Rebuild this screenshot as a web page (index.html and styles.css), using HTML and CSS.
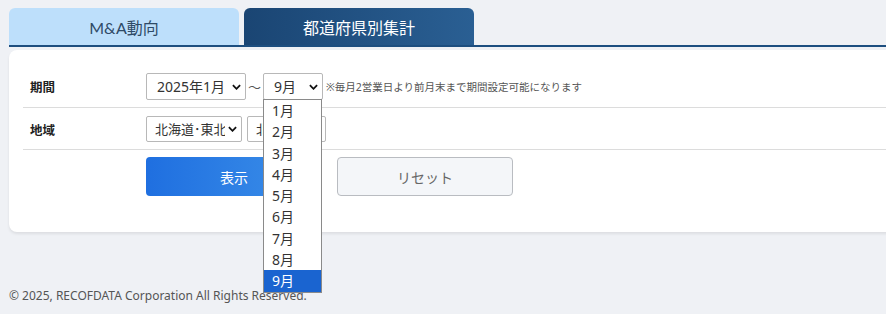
FILE: index.html
```html
<!DOCTYPE html>
<html lang="ja">
<head>
    <meta charset="UTF-8">
    <meta name="viewport" content="width=device-width, initial-scale=1.0">
    <title>都道府県別集計</title>
    <link rel="stylesheet" href="styles.css">
</head>
<body>
    <div class="page">
        <div class="tabs">
            <a class="tab" href="#">M&amp;A動向</a>
            <a class="tab active" href="#">都道府県別集計</a>
        </div>

        <div class="card">
            <div class="row">
                <div class="label">期間</div>
                <div class="fields">
                    <span class="select select-from">
                        <select>
                            <option>2025年1月</option>
                        </select>
                        <svg class="chevron" viewBox="0 0 10 6"><path d="M1 1l4 4 4-4" /></svg>
                    </span>
                    <span class="tilde">～</span>
                    <span class="select select-to">
                        <select>
                            <option>9月</option>
                        </select>
                        <svg class="chevron" viewBox="0 0 10 6"><path d="M1 1l4 4 4-4" /></svg>
                        <div class="listbox">
                            <div class="option">1月</div>
                            <div class="option">2月</div>
                            <div class="option">3月</div>
                            <div class="option">4月</div>
                            <div class="option">5月</div>
                            <div class="option">6月</div>
                            <div class="option">7月</div>
                            <div class="option">8月</div>
                            <div class="option selected">9月</div>
                        </div>
                    </span>
                    <span class="note">※毎月2営業日より前月末まで期間設定可能になります</span>
                </div>
            </div>

            <div class="row">
                <div class="label">地域</div>
                <div class="fields">
                    <span class="select select-area">
                        <select>
                            <option>北海道･東北</option>
                        </select>
                        <svg class="chevron" viewBox="0 0 10 6"><path d="M1 1l4 4 4-4" /></svg>
                    </span>
                    <span class="select select-pref">
                        <select>
                            <option>北海道</option>
                        </select>
                        <svg class="chevron" viewBox="0 0 10 6"><path d="M1 1l4 4 4-4" /></svg>
                    </span>
                </div>
            </div>

            <div class="actions">
                <button class="btn btn-primary">表示</button>
                <button class="btn btn-reset">リセット</button>
            </div>
        </div>

        <footer class="footer">© 2025, RECOFDATA Corporation All Rights Reserved.</footer>
    </div>
</body>
</html>
```

FILE: styles.css
```css
html, body {
    overflow: hidden;
}
body {
    margin: 0;
    background-color: #eff1f5;
    font-family: "Noto Sans", "Noto Sans CJK JP", sans-serif;
    color: #333;
}
.page {
    width: calc(100% + 30px);
    padding: 8px 0 0 9px;
    box-sizing: border-box;
}
.tabs {
    display: flex;
    gap: 5px;
    border-bottom: 2px solid #1d4e7f;
}
.tab {
    width: 230px;
    height: 37px;
    display: flex;
    align-items: center;
    justify-content: center;
    border-radius: 6px 6px 0 0;
    background-color: #bddffb;
    color: #2f4a66;
    font-family: "Lato", "Noto Sans CJK JP", sans-serif;
    font-size: 16px;
    text-decoration: none;
}
.tab.active {
    background: linear-gradient(to right, #1a4573, #2a5f93);
    color: #fff;
}
.card {
    margin-top: 3px;
    background-color: #fff;
    border-radius: 8px 0 0 8px;
    box-shadow: 0 2px 3px rgba(0, 0, 0, 0.08);
    padding: 15px 0 36px 14px;
}
.row {
    display: flex;
    align-items: center;
    padding: 8px 0 7px;
    border-bottom: 1px solid #dcdcdc;
}
.label {
    width: 116px;
    padding-left: 7px;
    font-size: 12.5px;
    font-weight: bold;
    color: #222;
}
.fields {
    display: flex;
    align-items: center;
    gap: 5px;
}
.select {
    position: relative;
    display: inline-block;
}
.select select {
    appearance: none;
    -webkit-appearance: none;
    height: 27px;
    border: 1px solid #b8b8b8;
    border-radius: 2px;
    background: #fff;
    font-family: "Noto Sans", "Noto Sans CJK JP", sans-serif;
    font-size: 14px;
    color: #333;
    padding: 0 20px 0 10px;
    box-sizing: border-box;
}
.select-from select { width: 100px; }
.select-to select { width: 60px; }
.select-area select { width: 96px; height: 26px; padding: 0 16px 0 8px; font-size: 13px; }
.select-pref select { width: 79px; height: 26px; padding-left: 8px; font-size: 13px; }
.chevron {
    position: absolute;
    right: 5px;
    top: 50%;
    width: 9px;
    height: 6px;
    margin-top: -3px;
    fill: none;
    stroke: #111;
    stroke-width: 2;
    pointer-events: none;
}
.tilde {
    font-size: 13px;
    color: #555;
    margin: 0 -3px;
}
.note {
    font-size: 10.5px;
    color: #555;
    margin-left: -2px;
}
.listbox {
    position: absolute;
    left: 0;
    top: 26px;
    width: 59px;
    background: #fff;
    border: 1px solid #8a8a8a;
    box-sizing: border-box;
    z-index: 10;
}
.option {
    height: 21.3px;
    line-height: 21px;
    padding-left: 8px;
    font-size: 14px;
    color: #333;
}
.option.selected {
    background-color: #1a64d0;
    color: #fff;
}
.actions {
    display: flex;
    gap: 15px;
    padding: 7px 0 0 123px;
}
.btn {
    width: 176px;
    height: 39px;
    border-radius: 4px;
    font-family: "Noto Sans", "Noto Sans CJK JP", sans-serif;
    font-size: 14px;
    cursor: pointer;
}
.btn-primary {
    border: none;
    background: linear-gradient(to right, #1f6fe0, #3d91e9);
    color: #fff;
}
.btn-reset {
    border: 1px solid #b9bcc1;
    background-color: #f4f6f9;
    color: #666;
}
.footer {
    margin-top: 55px;
    font-size: 12px;
    color: #555;
}
```
